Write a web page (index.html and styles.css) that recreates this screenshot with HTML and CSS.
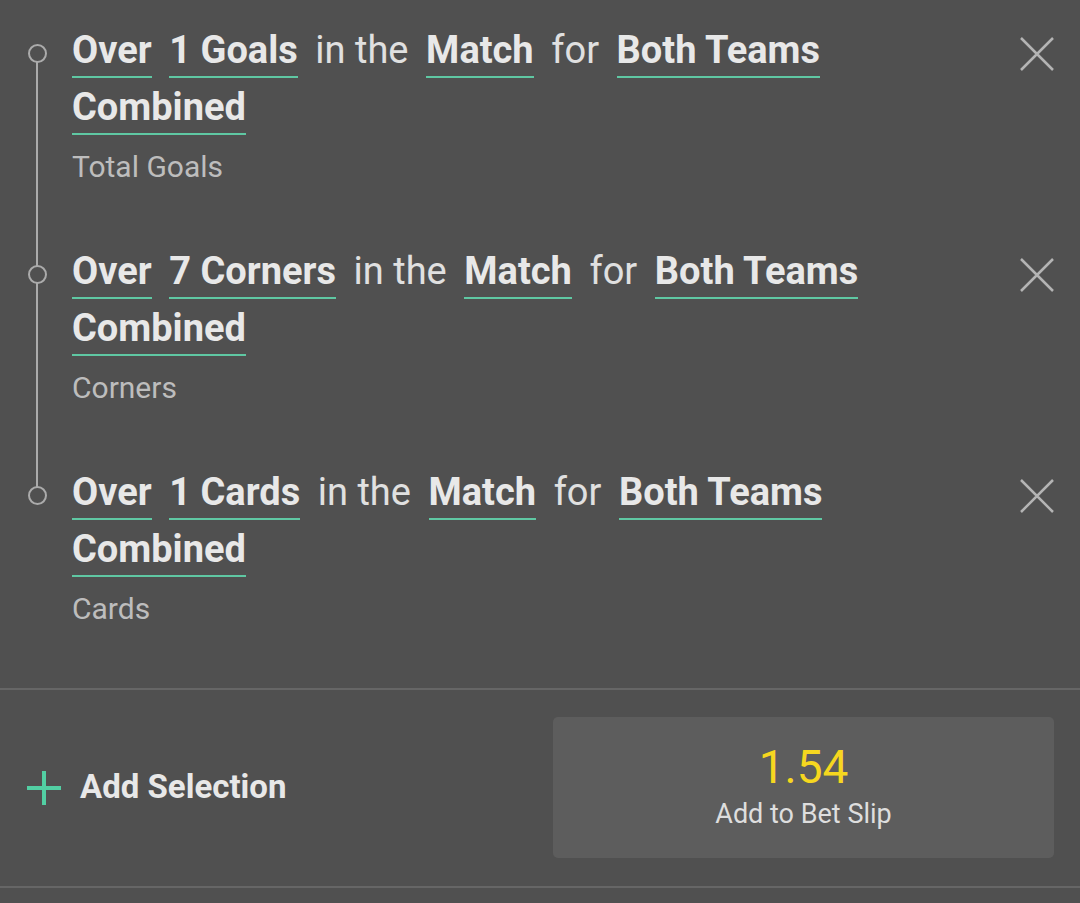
FILE: index.html
```html
<!DOCTYPE html>
<html lang="en">
<head>
    <meta charset="UTF-8">
    <meta name="viewport" content="width=device-width, initial-scale=1.0">
    <title>Bet Builder</title>
    <link rel="stylesheet" href="styles.css">
</head>
<body>
    <!-- list of selected legs -->
    <div id="legs">
        <div class="leg">
            <div class="rail"><div class="dot"></div></div>
            <div class="leg-body">
                <div class="title">
                    <span class="kw">Over</span>
                    <span class="kw">1 Goals</span>
                    <span class="txt">in the</span>
                    <span class="kw">Match</span>
                    <span class="txt">for</span>
                    <span class="kw">Both Teams</span>
                    <span class="kw">Combined</span>
                </div>
                <p class="market">Total Goals</p>
            </div>
            <div class="close">
                <svg width="34" height="34" viewBox="0 0 34 34"><path d="M1 1 L33 33 M33 1 L1 33"/></svg>
            </div>
        </div>
        <div class="leg">
            <div class="rail"><div class="dot"></div></div>
            <div class="leg-body">
                <div class="title">
                    <span class="kw">Over</span>
                    <span class="kw">7 Corners</span>
                    <span class="txt">in the</span>
                    <span class="kw">Match</span>
                    <span class="txt">for</span>
                    <span class="kw">Both Teams</span>
                    <span class="kw">Combined</span>
                </div>
                <p class="market">Corners</p>
            </div>
            <div class="close">
                <svg width="34" height="34" viewBox="0 0 34 34"><path d="M1 1 L33 33 M33 1 L1 33"/></svg>
            </div>
        </div>
        <div class="leg">
            <div class="rail"><div class="dot"></div></div>
            <div class="leg-body">
                <div class="title">
                    <span class="kw">Over</span>
                    <span class="kw">1 Cards</span>
                    <span class="txt">in the</span>
                    <span class="kw">Match</span>
                    <span class="txt">for</span>
                    <span class="kw">Both Teams</span>
                    <span class="kw">Combined</span>
                </div>
                <p class="market">Cards</p>
            </div>
            <div class="close">
                <svg width="34" height="34" viewBox="0 0 34 34"><path d="M1 1 L33 33 M33 1 L1 33"/></svg>
            </div>
        </div>
    </div>

    <!-- bottom bar -->
    <div id="footer">
        <div id="add-selection">
            <svg width="34" height="34" viewBox="0 0 34 34"><path d="M0 17 H34 M17 0 V34"/></svg>
            <span>Add Selection</span>
        </div>
        <div id="bet-btn">
            <span id="odds">1.54</span>
            <span id="bet-label">Add to Bet Slip</span>
        </div>
    </div>
</body>
</html>
```

FILE: styles.css
```css
/* bet builder panel */
body {
    margin: 0;
    background-color: #505050;
    font-family: Roboto, "Noto Sans", sans-serif;
    color: #e6e6e6;
}
#legs {
    padding-bottom: 25px;
}
.leg {
    display: flex;
    padding: 28px 0 37px 0;
}
.rail {
    position: relative;
    width: 72px;
    flex-shrink: 0;
}
/* timeline line, drawn in two halves round the dot */
.rail::before,
.rail::after {
    content: "";
    position: absolute;
    left: 36px;
    width: 2px;
    background-color: #ababab;
}
.rail::before {
    top: -28px;
    height: 53px;
}
.rail::after {
    top: 25px;
    bottom: -37px;
}
.leg:first-child .rail::before {
    display: none;
}
.leg:last-child .rail::after {
    display: none;
}
.dot {
    position: relative;
    z-index: 1;
    box-sizing: border-box;
    width: 19px;
    height: 19px;
    margin: 16px 0 0 28px;
    border: 2px solid #ababab;
    border-radius: 50%;
    background-color: #505050;
}
.leg-body {
    flex: 1;
}
.title {
    display: flex;
    flex-wrap: wrap;
    column-gap: 17.6px;
    row-gap: 7px;
}
.title span {
    font-size: 38px;
    line-height: 44px;
    padding-bottom: 4px;
    border-bottom: 2px solid transparent;
    white-space: nowrap;
}
.title .kw {
    font-weight: 700;
    color: #e8e8e8;
    border-bottom-color: #5fc8a3;
}
.title .txt {
    color: #e0e0e0;
}
.market {
    margin: 15px 0 0 0;
    font-size: 30px;
    line-height: 34px;
    color: #bdbdbd;
}
.close {
    width: 34px;
    height: 34px;
    margin: 9px 26px 0 30px;
    flex-shrink: 0;
}
.close path {
    stroke: #b4b4b4;
    stroke-width: 2.5;
    fill: none;
}
#footer {
    display: flex;
    align-items: center;
    justify-content: space-between;
    border-top: 2px solid #666666;
    border-bottom: 2px solid #666666;
    padding: 27px 26px 28px 27px;
}
#add-selection {
    display: flex;
    align-items: center;
    gap: 19px;
    font-size: 33px;
    font-weight: 700;
    color: #e8e8e8;
}
#add-selection span {
    margin-top: -3px;
}
#add-selection path {
    stroke: #52cfa3;
    stroke-width: 4;
    fill: none;
}
#bet-btn {
    display: flex;
    flex-direction: column;
    align-items: center;
    width: 501px;
    padding: 24px 0 29px 0;
    border-radius: 5px;
    background-color: #5d5d5d;
}
#odds {
    font-size: 46px;
    line-height: 52px;
    color: #f6d71f;
}
#bet-label {
    margin-top: 6px;
    font-size: 27px;
    line-height: 30px;
    color: #dedede;
}
```
